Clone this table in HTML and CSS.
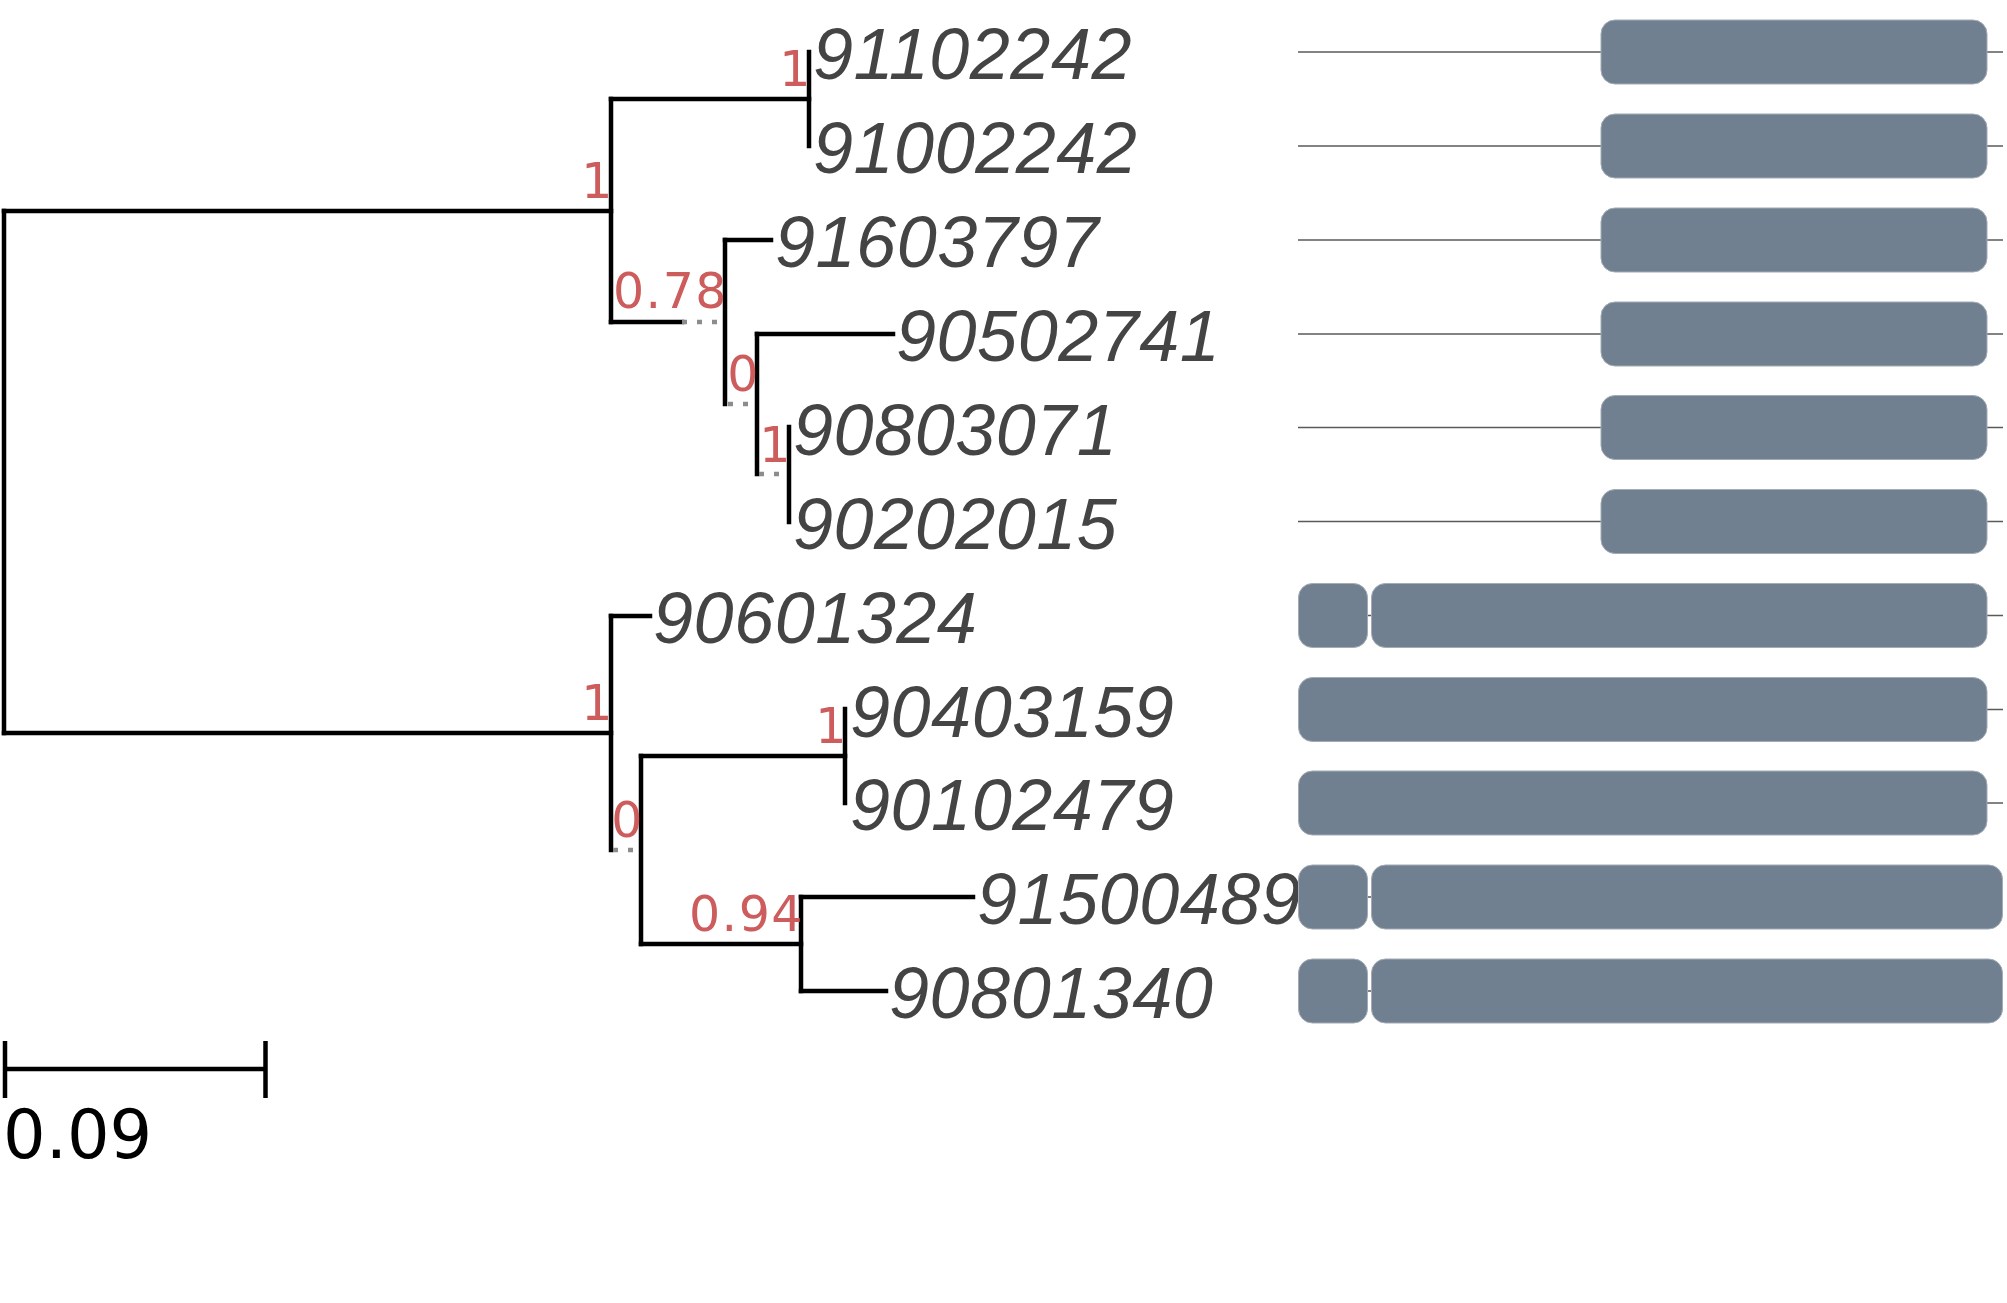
FILE: index.html
```html
<!DOCTYPE html>
<html lang="en">
<head>
<meta charset="utf-8">
<title>Phylogenetic tree</title>
<link rel="stylesheet" href="styles.css">
</head>
<body>
<figure class="tree-figure">
<svg class="tree" width="2007" height="1303" viewBox="0 0 2007 1303" xmlns="http://www.w3.org/2000/svg">
  <!-- branches -->
  <g class="branches">
    <line x1="4" y1="211" x2="4" y2="733"/>
    <line x1="4" y1="211" x2="611" y2="211"/>
    <line x1="4" y1="733" x2="611" y2="733"/>
    <!-- clade A -->
    <line x1="611" y1="99" x2="611" y2="322"/>
    <line x1="611" y1="99" x2="809" y2="99"/>
    <line x1="809" y1="52" x2="809" y2="146"/>
    <line x1="611" y1="322" x2="682" y2="322"/>
    <line x1="725" y1="240" x2="725" y2="404"/>
    <line x1="725" y1="240" x2="771" y2="240"/>
    <line x1="757" y1="334" x2="757" y2="474"/>
    <line x1="757" y1="334" x2="893" y2="334"/>
    <line x1="789" y1="427" x2="789" y2="522"/>
    <!-- clade B -->
    <line x1="611" y1="616" x2="611" y2="850"/>
    <line x1="611" y1="616" x2="650" y2="616"/>
    <line x1="641" y1="756" x2="641" y2="944"/>
    <line x1="641" y1="756" x2="845" y2="756"/>
    <line x1="845" y1="709" x2="845" y2="803"/>
    <line x1="641" y1="944" x2="801" y2="944"/>
    <line x1="801" y1="897" x2="801" y2="991"/>
    <line x1="801" y1="897" x2="973" y2="897"/>
    <line x1="801" y1="991" x2="886" y2="991"/>
  </g>
  <g class="extensions">
    <line x1="682" y1="322" x2="723" y2="322"/>
    <line x1="728" y1="404" x2="755" y2="404"/>
    <line x1="759" y1="474" x2="787" y2="474"/>
    <line x1="613" y1="850" x2="639" y2="850"/>
  </g>

  <!-- support values -->
  <g class="support">
    <text x="614" y="197.5">1</text>
    <text x="812" y="86">1</text>
    <text x="728" y="308">0.78</text>
    <text x="760" y="391">0</text>
    <text x="792" y="462">1</text>
    <text x="614" y="720">1</text>
    <text x="644" y="837">0</text>
    <text x="848" y="743">1</text>
    <text x="804" y="931">0.94</text>
  </g>

  <!-- leaf names -->
  <g class="leaf">
    <text x="813" y="79">91102242</text>
    <text x="813" y="173">91002242</text>
    <text x="775" y="267">91603797</text>
    <text x="896" y="361">90502741</text>
    <text x="793" y="454.5">90803071</text>
    <text x="793" y="548.5">90202015</text>
    <text x="653" y="642.5">90601324</text>
    <text x="850" y="736.5">90403159</text>
    <text x="850" y="830">90102479</text>
    <text x="977" y="924">91500489</text>
    <text x="889" y="1018">90801340</text>
  </g>

  <!-- domain architecture -->
  <g class="connectors">
    <line x1="1298" y1="52" x2="2003" y2="52"/>
    <line x1="1298" y1="146" x2="2003" y2="146"/>
    <line x1="1298" y1="240" x2="2003" y2="240"/>
    <line x1="1298" y1="334" x2="2003" y2="334"/>
    <line x1="1298" y1="427.5" x2="2003" y2="427.5"/>
    <line x1="1298" y1="521.5" x2="2003" y2="521.5"/>
    <line x1="1298" y1="615.5" x2="2003" y2="615.5"/>
    <line x1="1298" y1="709.5" x2="2003" y2="709.5"/>
    <line x1="1298" y1="803" x2="2003" y2="803"/>
    <line x1="1298" y1="897" x2="2002" y2="897"/>
    <line x1="1298" y1="991" x2="2002" y2="991"/>
  </g>
  <g class="domains">
    <rect x="1601" y="20" width="386" height="64" rx="14"/>
    <rect x="1601" y="114" width="386" height="64" rx="14"/>
    <rect x="1601" y="208" width="386" height="64" rx="14"/>
    <rect x="1601" y="302" width="386" height="64" rx="14"/>
    <rect x="1601" y="395.5" width="386" height="64" rx="14"/>
    <rect x="1601" y="489.5" width="386" height="64" rx="14"/>

    <rect x="1298.5" y="583.5" width="69" height="64" rx="14"/>
    <rect x="1371.5" y="583.5" width="615.5" height="64" rx="14"/>
    <rect x="1298.5" y="677.5" width="688.5" height="64" rx="14"/>
    <rect x="1298.5" y="771" width="688.5" height="64" rx="14"/>
    <rect x="1298.5" y="865" width="69" height="64" rx="14"/>
    <rect x="1371.5" y="865" width="631" height="64" rx="14"/>
    <rect x="1298.5" y="959" width="69" height="64" rx="14"/>
    <rect x="1371.5" y="959" width="631" height="64" rx="14"/>
  </g>

  <!-- scale bar -->
  <g class="scale">
    <line x1="5" y1="1069" x2="265.5" y2="1069"/>
    <line x1="5" y1="1041" x2="5" y2="1098"/>
    <line x1="265.5" y1="1041" x2="265.5" y2="1098"/>
  </g>
  <text class="scale-label" x="3" y="1158">0.09</text>
</svg>
</figure>
</body>
</html>
```

FILE: styles.css
```css
html, body {
  margin: 0;
  padding: 0;
  background: #ffffff;
}

.tree-figure {
  margin: 0;
  width: 2007px;
  height: 1303px;
  overflow: hidden;
}

.tree {
  display: block;
}

.branches line {
  stroke: #000000;
  stroke-width: 4.5;
  stroke-linecap: square;
  fill: none;
}

.extensions line {
  stroke: #8c8c8c;
  stroke-width: 4.5;
  stroke-dasharray: 5 10;
  stroke-linecap: butt;
}

.support text {
  font-family: "DejaVu Sans", sans-serif;
  font-size: 49px;
  letter-spacing: 1.5px;
  fill: #cd5c5c;
  text-anchor: end;
}

.leaf text {
  font-family: "Liberation Sans", Arial, sans-serif;
  font-style: italic;
  font-size: 72px;
  letter-spacing: 0.5px;
  fill: #444444;
}

.connectors line {
  stroke: #5a5a5a;
  stroke-width: 1.3;
}

.domains rect {
  fill: #708090;
  stroke: #a3abb4;
  stroke-width: 1;
}

.scale line {
  stroke: #000000;
  stroke-width: 4.5;
}

.scale-label {
  font-family: "DejaVu Sans", sans-serif;
  font-size: 67px;
  fill: #000000;
}
```
